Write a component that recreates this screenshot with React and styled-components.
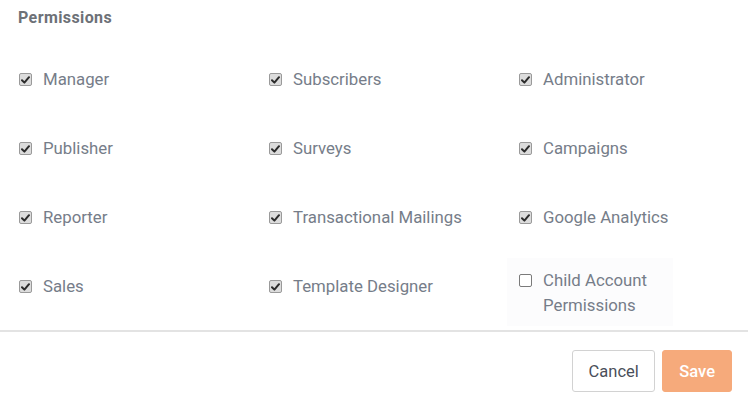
import React from "react";
import styled, { createGlobalStyle } from "styled-components";

const Global = createGlobalStyle`
  html, body { margin: 0; padding: 0; background: #fff; }
  body { font-family: Roboto, "Liberation Sans", sans-serif; }
`;

const Panel = styled.div`
  width: 748px;
  height: 410px;
  display: flex;
  flex-direction: column;
  background: #fff;
`;

const Body = styled.div`
  padding: 8px 0 31px 19px;
`;

const Heading = styled.div`
  font-size: 16px;
  line-height: 20px;
  font-weight: 700;
  letter-spacing: 0.4px;
  color: #6d7177;
  margin-left: -1px;
`;

const Grid = styled.div`
  display: grid;
  grid-template-columns: 250px 250px 250px;
  grid-auto-rows: 25px;
  row-gap: 44px;
  margin-top: 39px;
`;

const Item = styled.label`
  display: flex;
  align-items: flex-start;
  gap: 11px;
  font-size: 16.8px;
  line-height: 25px;
  color: #767d89;
  position: relative;
  ${(p) =>
    p.$tall &&
    `
    margin-top: -6px;
    height: 50px;
  `}
`;

const Shade = styled.div`
  position: absolute;
  left: -12px;
  top: -10px;
  width: 166px;
  height: 68px;
  background: #fcfcfd;
  z-index: 0;
`;

const Box = styled.span`
  position: relative;
  z-index: 1;
  flex: none;
  width: 13px;
  height: 13px;
  margin-top: 6px;
  box-sizing: border-box;
  border-radius: 2px;
  border: 1px solid ${(p) => (p.$checked ? "#9a9a9a" : "#7a7a7a")};
  background: ${(p) => (p.$checked ? "#dcdcdc" : "#fff")};
  display: flex;
  align-items: center;
  justify-content: center;
`;

const Text = styled.span`
  position: relative;
  z-index: 1;
  width: ${(p) => (p.$narrow ? "115px" : "auto")};
`;

const Footer = styled.div`
  border-top: 2px solid #e3e3e3;
  display: flex;
  justify-content: flex-end;
  gap: 7px;
  padding: 18px 16px 0 0;
`;

const Button = styled.button`
  height: 42px;
  padding: 0 ${(p) => (p.$primary ? "16px" : "15.5px")};
  font-family: Roboto, "Liberation Sans", sans-serif;
  font-size: 16.5px;
  border-radius: 3px;
  border: 1px solid ${(p) => (p.$primary ? "#f6aa7b" : "#d2d2d2")};
  background: ${(p) => (p.$primary ? "#f6aa7b" : "#fff")};
  color: ${(p) => (p.$primary ? "#fff" : "#4a4f5a")};
  font-weight: ${(p) => (p.$primary ? 500 : 400)};
`;

const Check = () => (
  <svg width="9" height="8" viewBox="0 0 9 8">
    <path d="M1 4.2 L3.4 6.6 L8 1.2" fill="none" stroke="#2b2b2b" strokeWidth="2" strokeLinecap="round" strokeLinejoin="round" />
  </svg>
);

const items = [
  ["Manager", true],
  ["Subscribers", true],
  ["Administrator", true],
  ["Publisher", true],
  ["Surveys", true],
  ["Campaigns", true],
  ["Reporter", true],
  ["Transactional Mailings", true],
  ["Google Analytics", true],
  ["Sales", true],
  ["Template Designer", true],
  ["Child Account Permissions", false],
];

export default function App() {
  return (
    <>
      <Global />
      <Panel>
        <Body>
          <Heading>Permissions</Heading>
          <Grid>
            {items.map(([label, checked]) => {
              const tall = !checked;
              return (
                <Item key={label} $tall={tall}>
                  {tall && <Shade />}
                  <Box $checked={checked}>{checked && <Check />}</Box>
                  <Text $narrow={tall}>{label}</Text>
                </Item>
              );
            })}
          </Grid>
        </Body>
        <Footer>
          <Button>Cancel</Button>
          <Button $primary>Save</Button>
        </Footer>
      </Panel>
    </>
  );
}
